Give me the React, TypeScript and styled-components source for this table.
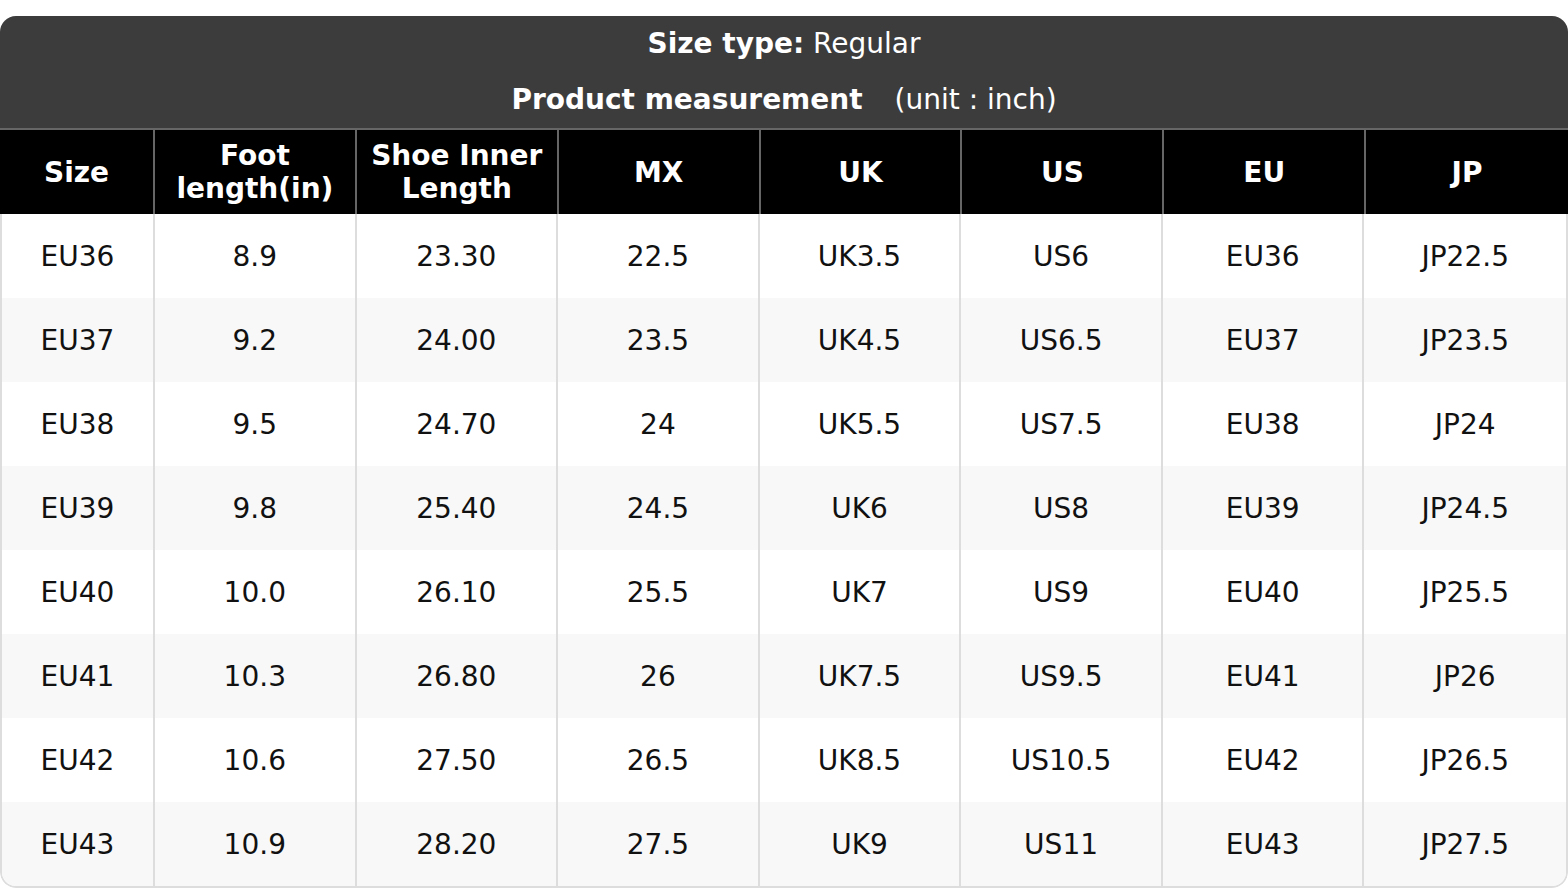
import React from 'react';
import styled, { createGlobalStyle } from 'styled-components';

const GlobalStyle = createGlobalStyle`
  html, body {
    margin: 0;
    padding: 0;
    background: #ffffff;
  }
  body {
    font-family: 'DejaVu Sans', 'Liberation Sans', sans-serif;
  }
`;

const Page = styled.div`
  padding-top: 16px;
`;

const Chart = styled.div`
  border-radius: 16px;
  overflow: hidden;
  background: #ffffff;
`;

const Caption = styled.div`
  background: #3c3c3c;
  color: #ffffff;
  font-size: 28px;
  line-height: 34px;
  text-align: center;
  padding: 11px 0 11px;
  display: flex;
  flex-direction: column;
  gap: 22px;
  border-bottom: 2px solid #666666;
`;

const Bold = styled.b`
  font-weight: 700;
`;

const Unit = styled.span`
  margin-left: 32px;
`;

const HeadRow = styled.div`
  display: grid;
  grid-template-columns: 155px repeat(7, 1fr);
`;

const Body = styled.div`
  display: grid;
  grid-template-columns: 153px repeat(7, 1fr);
  border: 2px solid #dddddd;
  border-top: none;
  border-radius: 0 0 16px 16px;
  overflow: hidden;
`;

const HeadCell = styled.div<{ $last?: boolean }>`
  background: #000000;
  color: #ffffff;
  font-weight: 700;
  font-size: 28px;
  line-height: 33px;
  height: 84px;
  display: flex;
  align-items: center;
  justify-content: center;
  text-align: center;
  border-right: ${(p) => (p.$last ? 'none' : '2px solid #666666')};
`;

const Cell = styled.div<{ $stripe?: boolean; $last?: boolean }>`
  background: ${(p) => (p.$stripe ? '#f8f8f8' : '#ffffff')};
  color: #111111;
  font-size: 28px;
  height: 84px;
  display: flex;
  align-items: center;
  justify-content: center;
  border-right: ${(p) => (p.$last ? 'none' : '2px solid #dddddd')};
`;

const headers = [
  'Size',
  <>Foot<br />length(in)</>,
  <>Shoe Inner<br />Length</>,
  'MX',
  'UK',
  'US',
  'EU',
  'JP',
];

const rows = [
  ['EU36', '8.9', '23.30', '22.5', 'UK3.5', 'US6', 'EU36', 'JP22.5'],
  ['EU37', '9.2', '24.00', '23.5', 'UK4.5', 'US6.5', 'EU37', 'JP23.5'],
  ['EU38', '9.5', '24.70', '24', 'UK5.5', 'US7.5', 'EU38', 'JP24'],
  ['EU39', '9.8', '25.40', '24.5', 'UK6', 'US8', 'EU39', 'JP24.5'],
  ['EU40', '10.0', '26.10', '25.5', 'UK7', 'US9', 'EU40', 'JP25.5'],
  ['EU41', '10.3', '26.80', '26', 'UK7.5', 'US9.5', 'EU41', 'JP26'],
  ['EU42', '10.6', '27.50', '26.5', 'UK8.5', 'US10.5', 'EU42', 'JP26.5'],
  ['EU43', '10.9', '28.20', '27.5', 'UK9', 'US11', 'EU43', 'JP27.5'],
];

export default function App() {
  return (
    <Page>
      <GlobalStyle />
      <Chart>
        <Caption>
          <div>
            <Bold>Size type:</Bold> Regular
          </div>
          <div>
            <Bold>Product measurement</Bold>
            <Unit>(unit : inch)</Unit>
          </div>
        </Caption>
        <HeadRow>
          {headers.map((h, i) => (
            <HeadCell key={i} $last={i === headers.length - 1}>
              <span>{h}</span>
            </HeadCell>
          ))}
        </HeadRow>
        <Body>
          {rows.map((r, ri) =>
            r.map((v, ci) => (
              <Cell key={`${ri}-${ci}`} $stripe={ri % 2 === 1} $last={ci === r.length - 1}>
                {v}
              </Cell>
            ))
          )}
        </Body>
      </Chart>
    </Page>
  );
}
